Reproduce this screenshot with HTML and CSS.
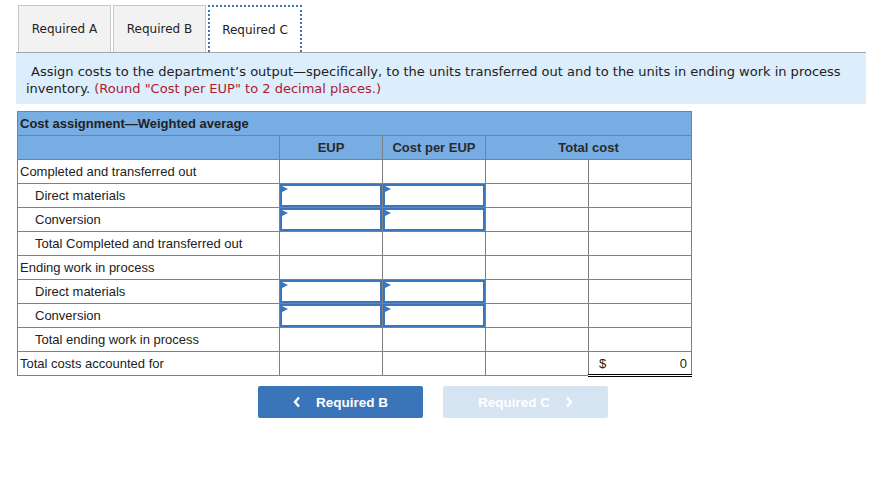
FILE: index.html
```html
<!DOCTYPE html>
<html>
<head>
<meta charset="utf-8">
<link rel="stylesheet" href="styles.css">
</head>
<body>
<div class="page">
  <div class="tabs">
    <div class="tab">Required A</div>
    <div class="tab">Required B</div>
    <div class="tab active">Required C</div>
  </div>
  <div class="instr">
    <p class="first">Assign costs to the department’s output—specifically, to the units transferred out and to the units in ending work in process inventory. <span class="red">(Round "Cost per EUP" to 2 decimal places.)</span></p>
  </div>
  <table class="grid">
    <colgroup>
      <col class="c1"><col class="c2"><col class="c3"><col class="c4"><col class="c5">
    </colgroup>
    <tr class="title"><td colspan="5">Cost assignment—Weighted average</td></tr>
    <tr class="head"><td></td><td>EUP</td><td>Cost per EUP</td><td colspan="2">Total cost</td></tr>
    <tr><td class="lab">Completed and transferred out</td><td></td><td></td><td></td><td></td></tr>
    <tr><td class="lab ind">Direct materials</td><td class="in"><div class="inp"></div></td><td class="in"><div class="inp"></div></td><td></td><td></td></tr>
    <tr><td class="lab ind">Conversion</td><td class="in"><div class="inp"></div></td><td class="in"><div class="inp"></div></td><td></td><td></td></tr>
    <tr><td class="lab ind">Total Completed and transferred out</td><td></td><td></td><td class="topblack"></td><td></td></tr>
    <tr><td class="lab">Ending work in process</td><td></td><td></td><td></td><td></td></tr>
    <tr><td class="lab ind">Direct materials</td><td class="in"><div class="inp"></div></td><td class="in"><div class="inp"></div></td><td></td><td></td></tr>
    <tr><td class="lab ind">Conversion</td><td class="in"><div class="inp"></div></td><td class="in"><div class="inp"></div></td><td></td><td></td></tr>
    <tr><td class="lab ind">Total ending work in process</td><td></td><td></td><td class="topblack"></td><td></td></tr>
    <tr><td class="lab">Total costs accounted for</td><td></td><td></td><td></td><td class="grand"><span class="dollar">$</span><span class="amt">0</span></td></tr>
  </table>
  <div class="nav">
    <div class="btn prev"><svg class="chev" width="8" height="12" viewBox="0 0 8 12"><polyline points="6,1.5 2,6 6,10.5" fill="none" stroke="#fff" stroke-width="2.4"/></svg>Required B</div>
    <div class="btn next">Required C<svg class="chev" width="8" height="12" viewBox="0 0 8 12"><polyline points="2,1.5 6,6 2,10.5" fill="none" stroke="#fff" stroke-width="2.4"/></svg></div>
  </div>
</div>
</body>
</html>
```
FILE: styles.css
```css
html, body { margin: 0; padding: 0; background: #fff; }
.page { padding: 5px 16px 0 16px; width: 850px; }
.tabs {
  display: flex;
  gap: 2px;
  padding-left: 2px;
  border-bottom: 1px solid #a6a6a6;
  height: 47px;
}
.tab {
  width: 91px;
  height: 46px;
  background: #f2f2f2;
  border: 1px solid #c8c8c8;
  border-bottom: none;
  font-family: "DejaVu Sans", Verdana, sans-serif;
  font-size: 12px;
  color: #222;
  display: flex;
  align-items: center;
  justify-content: center;
  box-sizing: content-box;
}
.tab.active {
  background: #fff;
  border: 2px dotted #3f72b5;
  border-bottom: none;
  width: 90px;
  height: 45px;
}
.instr {
  background: #dcedfb;
  height: 51px;
  padding: 10px 10px 0 10px;
  box-sizing: border-box;
}
.instr p {
  margin: 0;
  font-family: "DejaVu Sans", Verdana, sans-serif;
  font-size: 13px;
  line-height: 17px;
  color: #222;
  text-indent: 5px;
}
.red { color: #b01a31; }
.grid {
  margin: 7px 0 0 1px;
  border-collapse: collapse;
  table-layout: fixed;
  width: 674px;
  font-family: "Liberation Sans", Arial, sans-serif;
  font-size: 13px;
  color: #222;
}
.c1 { width: 262px; }
.c2, .c3, .c4 { width: 103px; }
.c5 { width: 103px; }
.grid td {
  border: 1px solid #808080;
  height: 23px;
  padding: 0;
  box-sizing: border-box;
}
.grid tr { height: 24px; }
.title td {
  background: #78ade3;
  font-weight: bold;
  padding-left: 2px;
}
.head td {
  background: #78ade3;
  text-align: center;
  font-weight: bold;
  color: #2a2a2a;
}
.lab { padding-left: 2px !important; white-space: nowrap; }
.lab.ind { padding-left: 17px !important; }
.in { position: relative; }
.inp {
  position: relative;
  height: 23px;
  border: 2px solid #3b75bb;
  box-sizing: border-box;
  margin: -1px 0 -1px 0;
}
.inp::before {
  content: "";
  position: absolute;
  left: 0;
  top: 0;
  border-left: 6px solid #3b75bb;
  border-top: 3.5px solid transparent;
  border-bottom: 3.5px solid transparent;
}
.grid td.topblack { border-top: 1px solid #000; }
.grid td.grand {
  border-top: 1px solid #000;
  border-bottom: 3px double #000;
  padding: 0 4px 0 10px;
}
.grand span { display: inline-block; }
.grand .dollar { float: left; }
.grand .amt { float: right; }
.nav {
  display: flex;
  gap: 20px;
  margin-top: 9px;
  padding-left: 242px;
}
.btn {
  width: 165px;
  height: 32px;
  border-radius: 2px;
  font-family: "Liberation Sans", Arial, sans-serif;
  font-weight: bold;
  font-size: 13.5px;
  color: #fff;
  display: flex;
  align-items: center;
  justify-content: center;
}
.prev { background: #3a75ba; }
.next { background: #d6e3f1; }
.prev .chev { margin-right: 15px; }
.next .chev { margin-left: 15px; }
```
